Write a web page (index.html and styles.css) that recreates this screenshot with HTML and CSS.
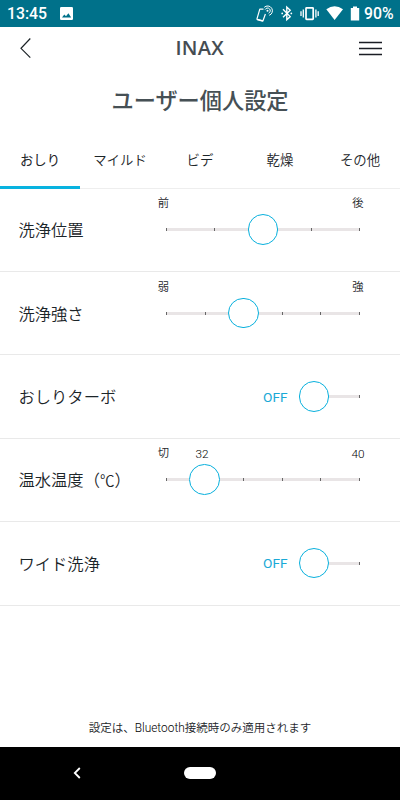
FILE: index.html
```html
<!DOCTYPE html>
<html lang="ja">
<head>
<meta charset="utf-8">
<title>ユーザー個人設定</title>
<link rel="stylesheet" href="styles.css">
</head>
<body>
<div class="screen">
  <div class="status">
    <span class="clock">13:45</span>
    <svg class="photo" width="13" height="13" viewBox="0 0 13 13"><rect width="13" height="13" rx="1.3" fill="#fff"/><path d="M2 10.5 4.3 7.4 6 9.3 8.4 6.2 11.2 10.5Z" fill="#00718a"/></svg>
    <svg class="status-icons" width="108" height="26" viewBox="0 0 108 26" fill="none" stroke="#fff">
      <path d="M7.5 9.1H3.8L.9 19.2 6.9 21 9.4 14" stroke-width="1.2" stroke-linejoin="round"/>
      <path d="M1.2 19.4 6.9 21.1" stroke-width="1.6"/>
      <circle cx="11.5" cy="10.8" r="1" fill="#fff" stroke="none"/>
      <path d="M9.1 9.6A2.7 2.7 0 1 1 12.6 13.2M8.2 7.4A4.8 4.8 0 1 1 13.2 15.3" stroke-width="1"/>
      <path d="M27 9.3 34.2 16.6 30.8 19.7V7L34.2 10.2 27 17.3" stroke-width="1.4"/>
      <path d="M26.2 13.4h.01M35.3 13.4h.01" stroke-width="1.8" stroke-linecap="round"/>
      <rect x="50" y="7.8" width="7.2" height="11.6" rx=".6" stroke-width="1.7"/>
      <path d="M47.3 9.6v8M59.9 9.6v8M45 11.3v4.8M62.2 11.3v4.8" stroke-width="1.3"/>
      <path d="M70.3 9.3Q78.6 3.4 87 9.3L78.6 20Z" fill="#fff" stroke="none"/>
      <path d="M94.8 8.1H97V6.5H101V8.1H103.2V20.6H94.8Z" fill="#fff" stroke="none"/>
    </svg>
    <span class="percent">90%</span>
  </div>
  <header class="bar">
    <svg class="back" width="12" height="22" viewBox="0 0 12 22"><path d="M10.3 1.5 1 11.3 10.3 20.7" fill="none" stroke="#1b2226" stroke-width="1.2"/></svg>
    <span class="brand">INAX</span>
    <svg class="menu" width="23" height="15" viewBox="0 0 23 15"><path d="M0 1.5H23M0 7.5H23M0 13.5H23" stroke="#1b1d24" stroke-width="1.3"/></svg>
  </header>
  <h1>ユーザー個人設定</h1>
  <nav class="tabs">
    <span class="tab active">おしり</span>
    <span class="tab">マイルド</span>
    <span class="tab">ビデ</span>
    <span class="tab">乾燥</span>
    <span class="tab">その他</span>
  </nav>
  <main>
    <section class="row">
      <span class="name">洗浄位置</span>
      <div class="slider">
        <span class="mark start">前</span><span class="mark end">後</span>
        <div class="track"><i></i><i></i><i></i><i></i><i></i><b class="thumb half"></b></div>
      </div>
    </section>
    <section class="row">
      <span class="name">洗浄強さ</span>
      <div class="slider">
        <span class="mark start">弱</span><span class="mark end">強</span>
        <div class="track"><i></i><i></i><i></i><i></i><i></i><i></i><b class="thumb two-fifths"></b></div>
      </div>
    </section>
    <section class="row">
      <span class="name">おしりターボ</span>
      <span class="off">OFF</span>
      <div class="slider toggle">
        <div class="track"><i></i><i></i><b class="thumb zero"></b></div>
      </div>
    </section>
    <section class="row">
      <span class="name">温水温度（<span class="unit">℃</span>）</span>
      <div class="slider">
        <span class="mark start">切</span><span class="mark fifth">32</span><span class="mark end">40</span>
        <div class="track"><i></i><i></i><i></i><i></i><i></i><i></i><b class="thumb one-fifth"></b></div>
      </div>
    </section>
    <section class="row">
      <span class="name">ワイド洗浄</span>
      <span class="off">OFF</span>
      <div class="slider toggle">
        <div class="track"><i></i><i></i><b class="thumb zero"></b></div>
      </div>
    </section>
  </main>
  <p class="note">設定は、<span class="latin">Bluetooth</span>接続時のみ適用されます</p>
  <footer class="navbar">
    <svg class="nav-back" width="8" height="12" viewBox="0 0 8 12"><path d="M6.8 1 1.8 6 6.8 11" fill="none" stroke="#fff" stroke-width="1.8"/></svg>
    <span class="home"></span>
    <span class="spacer"></span>
  </footer>
</div>
</body>
</html>
```
FILE: styles.css
```css
* { box-sizing: border-box; }
body {
  margin: 0;
  background: #fff;
  color: #1c2529;
  font-family: Roboto, "Noto Sans CJK JP", sans-serif;
  font-weight: 350;
}
.screen {
  width: 400px;
  height: 800px;
  display: flex;
  flex-direction: column;
  overflow: hidden;
}
svg { display: block; flex: none; }
.status {
  height: 26.5px;
  flex: none;
  display: flex;
  align-items: center;
  padding: 0 7px;
  background: #00718a;
  color: #fff;
  font-size: 15.8px;
  font-weight: 500;
  line-height: 26px;
}
.clock { width: 53px; padding-top: 2px; }
.photo { margin-top: 1px; }
.status-icons { margin-left: auto; }
.percent { padding-top: 2px; width: 29px; }
.bar {
  height: 43.5px;
  flex: none;
  display: flex;
  align-items: center;
  justify-content: space-between;
  padding: 0 18px 0 19.5px;
}
.back { width: 12px; margin-right: 9px; }
.brand {
  font-family: "Open Sans", sans-serif;
  font-weight: 600;
  font-size: 20px;
  line-height: 26px;
  letter-spacing: .3px;
  color: #454c52;
}
h1 {
  margin: 0;
  height: 62px;
  flex: none;
  line-height: 58px;
  text-align: center;
  font-family: "Noto Sans CJK JP", sans-serif;
  font-size: 22.2px;
  font-weight: 500;
  color: #465055;
}
.tabs {
  height: 56.6px;
  flex: none;
  display: grid;
  grid-template-columns: repeat(5, 1fr);
  border-bottom: 1px solid #eee;
}
.tab {
  height: 56.6px;
  line-height: 55px;
  text-align: center;
  font-family: "Noto Sans CJK JP", sans-serif;
  font-size: 13.4px;
  font-weight: 350;
}
.tab.active { border-bottom: 3px solid #08b3e0; font-weight: 400; }
.row {
  height: 83.4px;
  display: flex;
  align-items: center;
  padding: 0 40px 0 18.5px;
  border-bottom: 1px solid #e9e9e9;
}
.name {
  flex: 1;
  padding-bottom: 1px;
  font-family: "Noto Sans CJK JP", sans-serif;
  font-size: 16.3px;
  line-height: 24px;
  white-space: nowrap;
}
.unit { font-size: 14.5px; line-height: 1; }
.slider { position: relative; width: 194px; }
.slider.toggle { width: 46px; }
.track {
  height: 3px;
  display: flex;
  justify-content: space-between;
  position: relative;
  background: #e9e5e6;
}
.track i { width: 1px; height: 3px; background: #666; }
.thumb {
  position: absolute;
  top: -14px;
  width: 30.5px;
  height: 30.5px;
  margin-left: -15.5px;
  border: 1.3px solid #08b0dd;
  border-radius: 50%;
  background: #fff;
}
.zero { left: 0; }
.one-fifth { left: 20%; }
.two-fifths { left: 40%; }
.half { left: 50%; }
.mark {
  position: absolute;
  top: -32px;
  width: 40px;
  margin-left: -20px;
  text-align: center;
  font-size: 11.3px;
  line-height: 16px;
}
.start { left: -2.5px; }
.fifth { left: 36px; }
.end { left: 192px; }
.fifth, .fifth + .end { font-size: 11.8px; color: #000; }
.off { width: 51px; font-size: 13.7px; font-weight: 400; color: #19a9d6; }
.note {
  margin: auto 0 9px;
  text-align: center;
  font-size: 11.5px;
  line-height: 20px;
}
.latin { font-size: 11.9px; color: #000; }
.navbar {
  height: 53.5px;
  flex: none;
  display: flex;
  align-items: center;
  justify-content: space-between;
  padding: 0 73px;
  background: #000;
}
.home { width: 32px; height: 12px; border-radius: 6px; background: #fff; }
.spacer { width: 8px; }
```
